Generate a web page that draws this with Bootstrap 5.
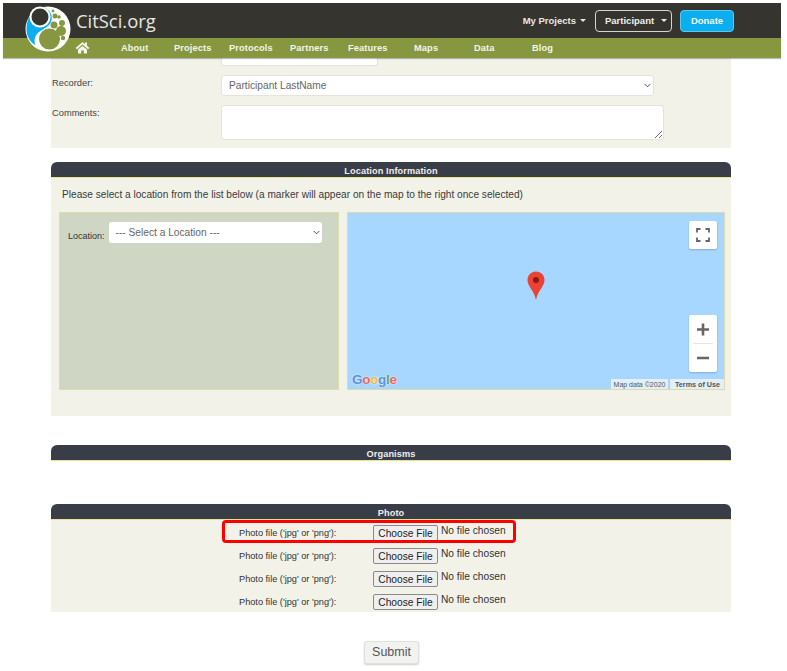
<!DOCTYPE html>
<html lang="en"><head><meta charset="utf-8"><title>CitSci.org</title>
<link href="https://cdn.jsdelivr.net/npm/bootstrap@5.3.0/dist/css/bootstrap.min.css" rel="stylesheet">
<style>
html,body{height:671px;overflow:hidden}
body{font-family:"Liberation Sans",Arial,sans-serif;color:#333;background:#fff;font-size:11px;position:relative}
.topwrap{padding:3px 6px 0 3px;position:relative}
.darkbar{background:#36342f;height:35px;padding-right:47px;padding-top:1px}
.greenbar{background:#87973f;height:20px;box-shadow:0 1px 1px rgba(0,0,0,.25)}
.greenbar a{color:#f4f4ea;text-decoration:none;font-weight:700;font-size:9.3px;letter-spacing:.1px;position:absolute;top:42px}
.logoart{position:absolute;left:25px;top:5px}
.brandtext{position:absolute;left:76px;top:9px;color:#e6e6e2;font-size:18.4px;line-height:24px;font-family:"Open Sans","Liberation Sans",sans-serif}
.myproj{color:#e8e8e4;font-weight:700;font-size:9.5px;margin-right:9px}
.caretmark{display:inline-block;border-top:3px solid currentColor;border-left:3px solid transparent;border-right:3px solid transparent;vertical-align:2px;margin-left:4px}
.partbtn{border:1px solid #d5d5d0;border-radius:4px;color:#f0f0ec;width:77px;height:22px;font-weight:700;font-size:9.5px;background:transparent;padding:0 0 0 9px;text-align:left;margin-right:8px}
.partbtn .caretmark{margin-left:7px}
.donatebtn{background:#0baeee;border:1px solid #5cc8f0;color:#f2f8fb;border-radius:4px;width:54px;height:22px;font-weight:700;font-size:9.5px;padding:0}
.mainarea{width:680px;margin-left:51px}
.sandpanel{background:#f2f2e8}
.toppanel{height:90px;margin-bottom:14px}
.formline{display:flex}
.lbl{width:170px;flex:none;padding:2px 0 0 1px;font-size:9.3px;color:#444}
.ctl{background-color:#fff;border:1px solid #e4e4dc;border-radius:3px;display:block;min-height:0}
.stub{width:157px;height:8px;margin-left:170px;border-top:0;border-radius:0 0 3px 3px}
.fakeselect{font-family:"Liberation Sans",Arial,sans-serif;font-size:10.2px;line-height:14px;color:#666;padding:0 0 0 7px;background-size:9px 7px;background-position:right 1px center}
.rec{width:433px;height:21px}
textarea.com{width:443px;height:35px;min-height:0;resize:vertical;padding:0}
.recline{height:21px;margin-top:9px}
.comline{margin-top:9px}
.panelhead{background:#393d47;color:#eceded;border-bottom:1px solid #e6e58e;border-radius:6px 6px 0 0;height:16px;line-height:18px;text-align:center;font-weight:700;font-size:9.2px;letter-spacing:.1px}
.locbody{height:238px;padding:0 6px 0 8px;margin-bottom:29px}
.locbody p{margin:0;padding:9px 0 0 3px;font-size:10.15px;line-height:15px;height:34px;color:#3a3a3a}
.locleft{width:280px;height:178px;background:#cfd6c3;border:1px solid #dcdcaa;padding:9px 0 0 8px;font-size:9px;color:#333}
.locleft span{margin-right:4px;padding-top:8px}
.locsel{width:213px;height:21px;border:0;border-radius:3px}
.mapbox{width:378px;height:178px;margin-left:8px;background:#a7d6fe;border:1px solid #dcdcaa;position:relative;overflow:hidden}
.mapctl{position:absolute;background:#fff;border-radius:2px;box-shadow:0 1px 2px rgba(0,0,0,.2);width:28px;left:341px}
.fullctl{top:8px;height:28px}
.zoomctl{top:102px;height:57px}
.pinart{position:absolute;left:179px;top:58px}
.glogo{position:absolute;left:4px;top:158px;font-size:13.5px;font-weight:700;line-height:18px;letter-spacing:-.3px;text-shadow:0 0 2px #fff}
.gblue{color:#5b8fe8}.gred{color:#e8685c}.gyellow{color:#f0bf3a}.ggreen{color:#4fae5f}
.attrib{position:absolute;top:166px;height:11px;line-height:11px;background:rgba(245,245,245,.75);font-size:7px;text-align:center;color:#555}
.attribdata{left:263px;width:57px}
.attribterms{left:322px;width:55px;font-weight:700;font-size:7.2px}
.orghead{margin-bottom:43px}
.photobody{height:92px;position:relative;margin-bottom:29px}
.photorow{height:23px;padding-left:188px;display:flex;color:#333;font-size:9.2px}
.photorow .plabel{width:134px;padding-top:8px;line-height:11px}
.choosebtn{width:65px;height:16px;background:#efefef;border:1px solid #8a8a8a;border-radius:2px;font-size:10.2px;line-height:13px;padding:0;color:#222;margin-top:5px;font-family:inherit}
.nofile{margin-left:3px;font-size:10.2px;line-height:12px;padding-top:5px;color:#333}
.redmark{position:absolute;left:171px;top:0;width:294px;height:23px;border:3px solid #f00;border-radius:4px;pointer-events:none}
.submitbtn{display:block;width:55px;height:23px;margin-left:313px;background:#f2f2f0;border:1px solid #e0e0dc;border-radius:3px;box-shadow:0 1px 2px rgba(0,0,0,.2);font-size:12.5px;color:#555;padding:0}
</style></head><body>
<div class="topwrap">
 <div class="darkbar d-flex align-items-center justify-content-end">
  <span class="myproj">My Projects<i class="caretmark"></i></span>
  <button type="button" class="btn partbtn">Participant<i class="caretmark"></i></button>
  <button type="button" class="btn donatebtn">Donate</button>
 </div>
 <div class="greenbar">
  <a href="#" style="left:75px;top:41px" aria-label="Home"><svg width="15" height="13" viewBox="0 0 15 13"><path d="M7.5 1 L0.5 7 L2 8.2 L7.5 3.6 L13 8.2 L14.5 7 L12 4.8 V1.5 H10 V3.100 Z" fill="#f4f4ea"/><path d="M3 8.600 L7.500 4.900 L12 8.600 V12.500 H8.800 V9.500 H6.200 V12.500 H3 Z" fill="#f4f4ea"/></svg></a>
  <a href="#" style="left:121px">About</a><a href="#" style="left:174px">Projects</a><a href="#" style="left:229px">Protocols</a><a href="#" style="left:290px">Partners</a><a href="#" style="left:348px">Features</a><a href="#" style="left:414px">Maps</a><a href="#" style="left:474px">Data</a><a href="#" style="left:532px">Blog</a>
 </div>
 <svg class="logoart" width="48" height="48" viewBox="0 0 48 48"><circle cx="23" cy="24" r="22.5" fill="#fff"/><path d="M20 2.500 C26 6 28 12 26 17 C24 22 18 24 14 27 C10 30 9 34 10 40 C4 36 1.500 30 1.500 24 C1.500 12 8 4 20 2.500Z" fill="#0baeee"/><circle cx="15" cy="12" r="10.500" fill="#fff"/><circle cx="15" cy="12" r="8.500" fill="#36342f"/><circle cx="24.500" cy="34" r="10.500" fill="#87973f"/><circle cx="36" cy="26" r="5" fill="#87973f"/><circle cx="29" cy="20" r="3.500" fill="#87973f"/><circle cx="37" cy="18" r="3" fill="#87973f"/><circle cx="30" cy="11" r="2.500" fill="#87973f"/><circle cx="34" cy="12" r="1.800" fill="#87973f"/><circle cx="28" cy="6" r="1.400" fill="#87973f"/><circle cx="38" cy="33" r="2.200" fill="#87973f"/></svg>
 <span class="brandtext">CitSci.org</span>
</div>
<main class="mainarea">
 <section class="sandpanel toppanel">
  <div class="ctl stub"></div>
  <div class="formline recline"><div class="lbl">Recorder:</div><select class="form-select ctl fakeselect rec" aria-label="Recorder"><option>Participant LastName</option></select></div>
  <div class="formline comline"><div class="lbl">Comments:</div><textarea class="form-control ctl com" aria-label="Comments"></textarea></div>
 </section>
 <section>
  <div class="panelhead">Location Information</div>
  <div class="sandpanel locbody">
   <p>Please select a location from the list below (a marker will appear on the map to the right once selected)</p>
   <div class="d-flex">
    <div class="locleft d-flex align-items-start"><span>Location:</span><select class="form-select fakeselect locsel" aria-label="Location"><option>--- Select a Location ---</option></select></div>
    <div class="mapbox">
     <div class="mapctl fullctl d-flex align-items-center justify-content-center"><svg width="14" height="14" viewBox="0 0 14 14" fill="none" stroke="#666" stroke-width="1.8"><path d="M1 4.500V1H4.500M9.500 1H13V4.500M13 9.500V13H9.500M4.500 13H1V9.500"/></svg></div>
     <div class="mapctl zoomctl"><svg class="d-block" width="28" height="57" viewBox="0 0 28 57"><path d="M8 14.500H20M14 8.500V20.500M8 43H20" stroke="#666" stroke-width="2.600" fill="none"/><path d="M4 28.500H24" stroke="#e6e6e6"/></svg></div>
     <svg class="pinart" width="18" height="30" viewBox="0 0 18 30"><path d="M9 .5C4 .5.5 4.200.5 9c0 6.500 6.500 10 8.500 20 2-10 8.500-13.500 8.500-20C17.500 4.200 14 .5 9 .5Z" fill="#ea4335"/><circle cx="9" cy="9" r="3" fill="#8f1710"/></svg>
     <div class="glogo"><span class="gblue">G</span><span class="gred">o</span><span class="gyellow">o</span><span class="gblue">g</span><span class="ggreen">l</span><span class="gred">e</span></div>
     <div class="attrib attribdata">Map data ©2020</div>
     <div class="attrib attribterms">Terms of Use</div>
    </div>
   </div>
  </div>
 </section>
 <section class="orghead"><div class="panelhead">Organisms</div></section>
 <section>
  <div class="panelhead">Photo</div>
  <div class="sandpanel photobody">
   <div class="photorow"><span class="plabel">Photo file ('jpg' or 'png'):</span><button type="button" class="choosebtn">Choose File</button><span class="nofile">No file chosen</span></div>
   <div class="photorow"><span class="plabel">Photo file ('jpg' or 'png'):</span><button type="button" class="choosebtn">Choose File</button><span class="nofile">No file chosen</span></div>
   <div class="photorow"><span class="plabel">Photo file ('jpg' or 'png'):</span><button type="button" class="choosebtn">Choose File</button><span class="nofile">No file chosen</span></div>
   <div class="photorow"><span class="plabel">Photo file ('jpg' or 'png'):</span><button type="button" class="choosebtn">Choose File</button><span class="nofile">No file chosen</span></div>
   <div class="redmark"></div>
  </div>
 </section>
 <button type="button" class="btn submitbtn">Submit</button>
</main>
</body></html>
